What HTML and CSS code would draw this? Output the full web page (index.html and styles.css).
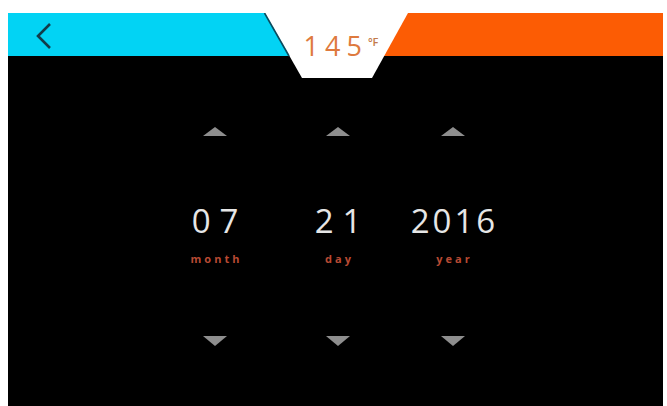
FILE: index.html
```html
<!DOCTYPE html>
<html>
<head>
<meta charset="utf-8">
<link rel="stylesheet" href="styles.css">
</head>
<body>
<div class="screen">
  <div class="topbar">
    <div class="bar-left">
      <svg class="back" width="20" height="30" viewBox="0 0 20 30"><polyline points="14,2 2,14 14,26" fill="none" stroke="#123c4a" stroke-width="2.6" stroke-linejoin="miter"/></svg>
    </div>
    <div class="bar-right"></div>
  </div>
  <div class="notch">
    <svg class="notch-shape" width="143" height="65" viewBox="0 0 143 65">
      <polygon points="0,0 143,0 107,65 37,65" fill="#ffffff"/>
      <line x1="-0.5" y1="0" x2="24" y2="43" stroke="#0d4a5c" stroke-width="1.6"/>
    </svg>
    <div class="temp"><span class="temp-val">145</span><span class="temp-unit">°F</span></div>
  </div>
  <div class="pickers">
    <div class="col">
      <div class="arrow up"></div>
      <div class="num wide">07</div>
      <div class="label">month</div>
      <div class="arrow down"></div>
    </div>
    <div class="col">
      <div class="arrow up"></div>
      <div class="num wide">21</div>
      <div class="label">day</div>
      <div class="arrow down"></div>
    </div>
    <div class="col">
      <div class="arrow up"></div>
      <div class="num">2016</div>
      <div class="label">year</div>
      <div class="arrow down"></div>
    </div>
  </div>
</div>
</body>
</html>
```

FILE: styles.css
```css
html, body {
  margin: 0;
  padding: 0;
  background: #ffffff;
}
body {
  font-family: "Open Sans", "DejaVu Sans", sans-serif;
}
.screen {
  position: relative;
  margin: 13px 0 0 8px;
  width: 655px;
  height: 393px;
  background: #000000;
  overflow: hidden;
}
.topbar {
  display: flex;
  height: 43px;
}
.bar-left {
  flex: 0 0 300px;
  background: #02d3f4;
  display: flex;
  align-items: flex-start;
}
.back {
  display: block;
  margin: 9px 0 0 28px;
}
.bar-right {
  flex: 1;
  background: #fc5c04;
}
.notch {
  position: absolute;
  left: 257px;
  top: 0;
  width: 143px;
  height: 65px;
}
.notch-shape {
  position: absolute;
  left: 0;
  top: 0;
  overflow: visible;
}
.temp {
  position: relative;
  display: flex;
  justify-content: center;
  align-items: flex-start;
  padding: 19px 0 0 9px;
}
.temp-val {
  font-size: 27px;
  line-height: 27px;
  letter-spacing: 6px;
  color: #de7a3e;
}
.temp-unit {
  font-size: 11px;
  line-height: 11px;
  margin-top: 4px;
  color: #c27a4a;
  font-weight: 600;
}
.pickers {
  display: grid;
  grid-template-columns: 120px 126px 104px;
  padding-left: 147px;
  padding-top: 71px;
}
.col {
  display: flex;
  flex-direction: column;
  align-items: center;
}
.arrow {
  width: 0;
  height: 0;
  border-left: 12px solid transparent;
  border-right: 12px solid transparent;
}
.arrow.up {
  border-bottom: 9px solid #8e8e8e;
}
.arrow.down {
  border-top: 10px solid #8e8e8e;
  margin-top: 70px;
}
.num {
  margin-top: 65px;
  font-size: 33px;
  line-height: 40px;
  color: #e6e6e6;
  letter-spacing: 3px;
  padding-left: 3px;
}
.num.wide {
  letter-spacing: 9px;
  padding-left: 9px;
}
.label {
  margin-top: 11px;
  font-size: 11px;
  line-height: 14px;
  font-weight: 700;
  letter-spacing: 3px;
  padding-left: 3px;
  color: #b84a33;
}
```
